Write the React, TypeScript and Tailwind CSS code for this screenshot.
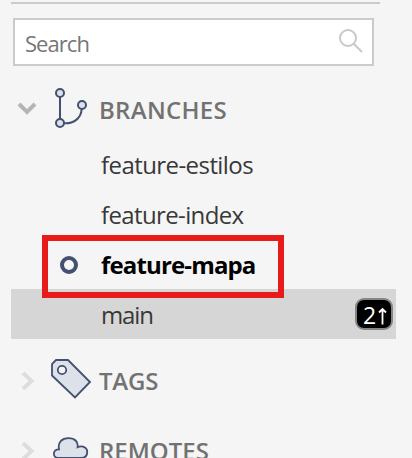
import type { ReactNode } from "react";

function Chevron({ open = false }: { open?: boolean }) {
  return open ? (
    <svg className="ml-[17px] h-5 w-5 shrink-0" viewBox="0 0 20 20" fill="none">
      <path d="M2 5 10 13 18 5" stroke="#b5b5b5" strokeWidth="4" />
    </svg>
  ) : (
    <svg className="ml-[17px] h-5 w-5 shrink-0" viewBox="0 0 20 20" fill="none">
      <path d="M6 2 14.5 10 6 18" stroke="#dddddd" strokeWidth="4" />
    </svg>
  );
}

function BranchIcon() {
  return (
    <svg className="ml-[13px] h-[44px] w-[44px] shrink-0" viewBox="50 87 44 44" fill="none" stroke="#43506f" strokeWidth="2">
      <path d="M60 96V119M64 123.3C73 124 81 119 81.7 109" />
      <circle cx="60" cy="93" r="4" fill="#dde1ea" />
      <circle cx="60" cy="123" r="4" fill="#dde1ea" />
      <circle cx="82" cy="105" r="4" fill="#dde1ea" />
    </svg>
  );
}

function TagIcon() {
  return (
    <svg className="ml-[13px] h-[44px] w-[44px] shrink-0" viewBox="50 359 44 44" fill="#dde1ea" stroke="#43506f" strokeWidth="1.8">
      <path d="M56 360H68L90 382 75 397.5 52 375.5V364Z" />
      <circle cx="62" cy="370" r="4.2" fill="#f5f5f5" />
    </svg>
  );
}

function CloudIcon() {
  return (
    <svg className="ml-[13px] h-[44px] w-[44px] shrink-0" viewBox="50 429 44 44" fill="#dde1ea" stroke="#43506f" strokeWidth="1.8">
      <path d="M57.500 458C52.500 457 52.500 449.500 59 449.300C57.500 442 62 438.200 68.500 438.200C75 438.200 78.500 442 77.600 447.200C83 445 87.500 448 87.200 452C87.200 455.500 85 458 81 458Z" />
    </svg>
  );
}

function Section({ title, icon, open, className, titleClass }: { title: string; icon: ReactNode; open?: boolean; className: string; titleClass: string }) {
  return (
    <div className={`flex shrink-0 items-center ${className}`}>
      <Chevron open={open} />
      {icon}
      <span className={`ml-[5px] text-[24px] font-semibold text-[#727272] ${titleClass}`}>{title}</span>
    </div>
  );
}

export default function App() {
  return (
    <div className="flex h-[458px] w-[412px] flex-col overflow-hidden bg-[#f5f5f5] pt-[2px] font-['Open_Sans','Noto_Sans',sans-serif] whitespace-nowrap">
      <div className="ml-[11px] h-[2px] w-[369px] shrink-0 bg-[#cbcbcb]" />
      <div className="mt-[14px] ml-[13px] flex h-[48px] w-[361px] shrink-0 items-center justify-between border-2 border-[#cbcbcb] bg-white pr-[9px] pl-[10px]">
        <span className="pt-[3px] text-[22px] leading-[41px] tracking-[-0.95px] text-[#767676]">Search</span>
        <svg className="mb-[5px] h-[26px] w-[26px]" viewBox="337 27 26 26" fill="none" stroke="#c9c9c9" strokeWidth="2">
          <circle cx="348" cy="38" r="8" />
          <path d="m353.500 43.500 8.500 8.500" />
        </svg>
      </div>
      <Section title="BRANCHES" icon={<BranchIcon />} open className="mt-[13px] h-[60px]" titleClass="pt-px tracking-[0.3px]" />

      <div className="flex h-[50px] shrink-0 items-center pt-[2px] pl-[101px] text-[24px] tracking-[-0.57px] text-[#383838]">feature-estilos</div>
      <div className="flex h-[50px] shrink-0 items-center pt-[2px] pl-[101px] text-[24px] tracking-[-0.63px] text-[#383838]">feature-index</div>
      <div className="relative flex h-[50px] shrink-0 items-center pl-[60px]">
        <span className="mt-[2px] h-[18px] w-[18px] rounded-full border-4 border-[#43506f]" />
        <span className="ml-[23px] pt-[2px] text-[24px] font-bold tracking-[-0.85px] text-black">feature-mapa</span>
        <div className="absolute -top-[4px] left-[42px] z-10 h-[63px] w-[242px] border-[6px] border-[#e81b1b]" />
      </div>
      <div className="ml-[11px] flex h-[50px] w-[385px] shrink-0 items-center justify-between bg-[#d6d6d6] pr-[3px] pl-[90px]">
        <span className="pt-[2px] text-[24px] tracking-[-1.1px] text-[#383838]">main</span>
        <span className="flex h-[32px] w-[38px] items-center rounded-[9px] border-2 border-[#858585] bg-black pl-[6px] text-[23px] text-white">
          <span className="pt-[2px]">2</span>
          <svg className="mt-[3px] ml-[2px] h-[18px] w-[9px]" viewBox="0 0 9 18" fill="none" stroke="currentColor" strokeWidth="1.8">
            <path d="M4.500 17.500V2M1 5.500 4.500 2 8 5.500" />
          </svg>
        </span>
      </div>

      <Section title="TAGS" icon={<TagIcon />} className="mt-[7px] h-[70px]" titleClass="tracking-[-0.2px]" />
      <Section title="REMOTES" icon={<CloudIcon />} className="h-[70px]" titleClass="tracking-[0px]" />
    </div>
  );
}
